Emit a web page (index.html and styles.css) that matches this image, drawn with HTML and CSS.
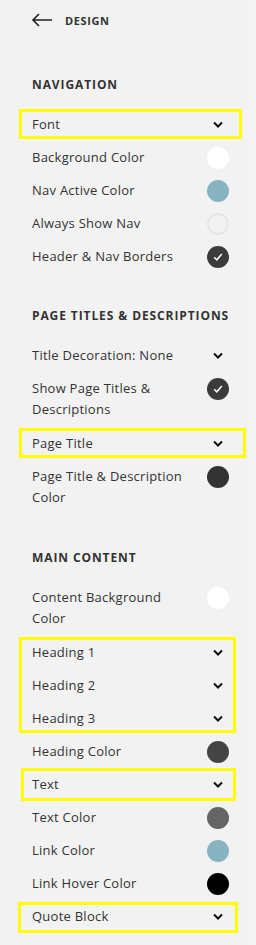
FILE: index.html
```html
<!DOCTYPE html>
<html lang="en">
<head>
    <meta charset="UTF-8">
    <meta name="viewport" content="width=device-width, initial-scale=1.0">
    <title>Design</title>
    <link rel="stylesheet" href="styles.css">
</head>
<body>
    <div class="panel">
        <div class="topbar">
            <svg class="back" width="22" height="14" viewBox="0 0 22 14">
                <path d="M21 7H2M8 1L2 7l6 6" fill="none" stroke="#222" stroke-width="1.6"/>
            </svg>
            <span class="topbar-title">DESIGN</span>
        </div>

        <div class="section">
            <h3>NAVIGATION</h3>
            <div class="mark mark-font">
                <div class="row"><span class="label">Font</span><span class="ctrl"><svg class="chev" width="10" height="7" viewBox="0 0 10 7"><path d="M1 1.5l4 4 4-4" fill="none" stroke="#111" stroke-width="2"/></svg></span></div>
            </div>
            <div class="row"><span class="label">Background Color</span><span class="ctrl"><span class="swatch white"></span></span></div>
            <div class="row"><span class="label">Nav Active Color</span><span class="ctrl"><span class="swatch teal"></span></span></div>
            <div class="row"><span class="label">Always Show Nav</span><span class="ctrl"><span class="swatch off"></span></span></div>
            <div class="row"><span class="label">Header &amp; Nav Borders</span><span class="ctrl"><span class="swatch on"><svg width="10" height="8" viewBox="0 0 10 8"><path d="M1.2 4.2l2.6 2.6L8.8 1" fill="none" stroke="#fff" stroke-width="1.5"/></svg></span></span></div>
        </div>

        <div class="section">
            <h3>PAGE TITLES &amp; DESCRIPTIONS</h3>
            <div class="row"><span class="label">Title Decoration: None</span><span class="ctrl"><svg class="chev" width="10" height="7" viewBox="0 0 10 7"><path d="M1 1.5l4 4 4-4" fill="none" stroke="#111" stroke-width="2"/></svg></span></div>
            <div class="row row-wrap"><span class="label">Show Page Titles &amp; Descriptions</span><span class="ctrl"><span class="swatch on"><svg width="10" height="8" viewBox="0 0 10 8"><path d="M1.2 4.2l2.6 2.6L8.8 1" fill="none" stroke="#fff" stroke-width="1.5"/></svg></span></span></div>
            <div class="mark mark-title">
                <div class="row"><span class="label">Page Title</span><span class="ctrl"><svg class="chev" width="10" height="7" viewBox="0 0 10 7"><path d="M1 1.5l4 4 4-4" fill="none" stroke="#111" stroke-width="2"/></svg></span></div>
            </div>
            <div class="row row-wrap"><span class="label">Page Title &amp; Description Color</span><span class="ctrl"><span class="swatch dark"></span></span></div>
        </div>

        <div class="section">
            <h3>MAIN CONTENT</h3>
            <div class="row row-wrap"><span class="label">Content Background Color</span><span class="ctrl"><span class="swatch white"></span></span></div>
            <div class="mark mark-headings">
                <div class="row"><span class="label">Heading 1</span><span class="ctrl"><svg class="chev" width="10" height="7" viewBox="0 0 10 7"><path d="M1 1.5l4 4 4-4" fill="none" stroke="#111" stroke-width="2"/></svg></span></div>
                <div class="row"><span class="label">Heading 2</span><span class="ctrl"><svg class="chev" width="10" height="7" viewBox="0 0 10 7"><path d="M1 1.5l4 4 4-4" fill="none" stroke="#111" stroke-width="2"/></svg></span></div>
                <div class="row"><span class="label">Heading 3</span><span class="ctrl"><svg class="chev" width="10" height="7" viewBox="0 0 10 7"><path d="M1 1.5l4 4 4-4" fill="none" stroke="#111" stroke-width="2"/></svg></span></div>
            </div>
            <div class="row"><span class="label">Heading Color</span><span class="ctrl"><span class="swatch grey4"></span></span></div>
            <div class="mark mark-text">
                <div class="row"><span class="label">Text</span><span class="ctrl"><svg class="chev" width="10" height="7" viewBox="0 0 10 7"><path d="M1 1.5l4 4 4-4" fill="none" stroke="#111" stroke-width="2"/></svg></span></div>
            </div>
            <div class="row"><span class="label">Text Color</span><span class="ctrl"><span class="swatch grey6"></span></span></div>
            <div class="row"><span class="label">Link Color</span><span class="ctrl"><span class="swatch teal"></span></span></div>
            <div class="row"><span class="label">Link Hover Color</span><span class="ctrl"><span class="swatch black"></span></span></div>
            <div class="mark mark-quote">
                <div class="row"><span class="label">Quote Block</span><span class="ctrl"><svg class="chev" width="10" height="7" viewBox="0 0 10 7"><path d="M1 1.5l4 4 4-4" fill="none" stroke="#111" stroke-width="2"/></svg></span></div>
            </div>
        </div>
    </div>
    <div class="track"></div>
</body>
</html>
```

FILE: styles.css
```css
body {
    margin: 0;
    display: flex;
    background-color: #f2f2f2;
    font-family: "Open Sans", sans-serif;
    color: #333;
    overflow: hidden;
}

.panel {
    width: 248px;
    flex-shrink: 0;
}

.track {
    flex: 1;
    min-height: 945px;
    background-color: #f5f5f5;
}

.topbar {
    height: 42px;
    display: flex;
    align-items: center;
    padding-left: 31px;
}

.back {
    display: block;
    margin-top: -2px;
}

.topbar-title {
    margin-left: 12px;
    margin-top: -2px;
    font-size: 11px;
    font-weight: 700;
    letter-spacing: 0.6px;
    color: #333;
}

.section {
    padding-top: 34px;
}

.section h3 {
    margin: 0 0 15px;
    padding-left: 32px;
    font-size: 12px;
    line-height: 17px;
    font-weight: 700;
    letter-spacing: 0.9px;
    color: #333;
}

.row {
    display: flex;
    align-items: flex-start;
    padding: 6px 19px 6px 32px;
    font-size: 13px;
    line-height: 21px;
    letter-spacing: 0.25px;
}

.row-wrap {
    padding-bottom: 7px;
}

.label {
    flex: 1;
    padding-right: 18px;
}

.ctrl {
    width: 22px;
    height: 21px;
    display: flex;
    align-items: center;
    justify-content: center;
}

.chev {
    display: block;
}

.swatch {
    width: 22px;
    height: 22px;
    flex-shrink: 0;
    border-radius: 50%;
    box-sizing: border-box;
    display: flex;
    align-items: center;
    justify-content: center;
}

.white { background-color: #fff; }
.teal { background-color: #86b5c1; }
.off { border: 2px solid #e6e6e6; }
.on { background-color: #3b3b3b; }
.dark { background-color: #333; }
.grey4 { background-color: #444; }
.grey6 { background-color: #656565; }
.black { background-color: #000; }

/* yellow annotation boxes */
.mark {
    position: relative;
}

.mark::after {
    content: "";
    position: absolute;
    top: 0;
    bottom: 0;
    left: 19px;
    right: 6px;
    border: 3px solid #ffff00;
    pointer-events: none;
}

.mark-font::after { top: 1px; bottom: 2px; right: 6px; }
.mark-title::after { top: 1px; bottom: 2px; right: 2px; }
.mark-headings::after { top: 1px; bottom: 2px; right: 12px; }
.mark-text::after { left: 21px; right: 12px; }
.mark-quote::after { top: 2px; left: 18px; right: 10px; }
```
